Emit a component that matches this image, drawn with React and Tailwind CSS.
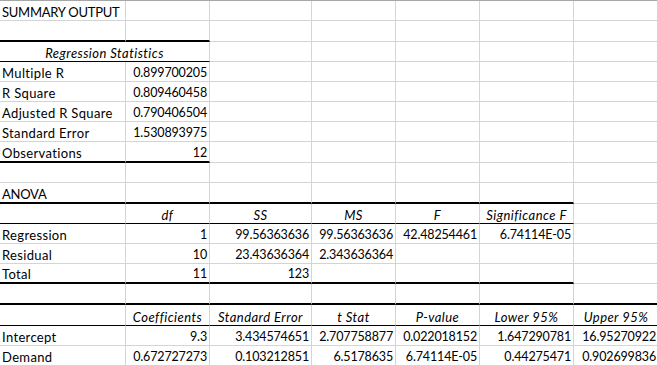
import React from 'react';

const COLS = [126, 84, 102, 84, 84, 94, 85];

// b: one char per column for the bottom edge — g gridline, k thin black, K thick black
// u: all-caps label
const rows = [
  { h: 20, c: [{ t: 'SUMMARY OUTPUT', u: true }] },
  { h: 21, c: [], b: 'KK' },
  { h: 20, c: [{ t: 'Regression Statistics', span: 2, a: 'c', i: true }], b: 'kk' },
  { h: 20, c: [{ t: 'Multiple R' }, { t: '0.899700205', a: 'r' }] },
  { h: 20, c: [{ t: 'R Square' }, { t: '0.809460458', a: 'r' }] },
  { h: 20, c: [{ t: 'Adjusted R Square' }, { t: '0.790406504', a: 'r' }] },
  { h: 20, c: [{ t: 'Standard Error' }, { t: '1.530893975', a: 'r' }] },
  { h: 21, c: [{ t: 'Observations' }, { t: '12', a: 'r' }], b: 'KK' },
  { h: 20, c: [] },
  { h: 21, c: [{ t: 'ANOVA', u: true }], b: 'KKKKKK' },
  {
    h: 20,
    c: [{}, { t: 'df', a: 'c', i: true }, { t: 'SS', a: 'c', i: true }, { t: 'MS', a: 'c', i: true }, { t: 'F', a: 'c', i: true }, { t: 'Significance F', a: 'c', i: true }],
    b: 'kkkkkk',
  },
  {
    h: 20,
    c: [{ t: 'Regression' }, { t: '1', a: 'r' }, { t: '99.56363636', a: 'r' }, { t: '99.56363636', a: 'r' }, { t: '42.48254461', a: 'r' }, { t: '6.74114E-05', a: 'r' }],
  },
  { h: 20, c: [{ t: 'Residual' }, { t: '10', a: 'r' }, { t: '23.43636364', a: 'r' }, { t: '2.343636364', a: 'r' }] },
  { h: 20, c: [{ t: 'Total' }, { t: '11', a: 'r' }, { t: '123', a: 'r' }], b: 'KKKKKK' },
  { h: 21, c: [], b: 'KKKKKKK' },
  {
    h: 21,
    c: [{}, { t: 'Coefficients', a: 'c', i: true }, { t: 'Standard Error', a: 'c', i: true }, { t: 't Stat', a: 'c', i: true }, { t: 'P-value', a: 'c', i: true }, { t: 'Lower 95%', a: 'c', i: true }, { t: 'Upper 95%', a: 'c', i: true }],
    b: 'kkkkkkk',
  },
  {
    h: 20,
    c: [{ t: 'Intercept' }, { t: '9.3', a: 'r' }, { t: '3.434574651', a: 'r' }, { t: '2.707758877', a: 'r' }, { t: '0.022018152', a: 'r' }, { t: '1.647290781', a: 'r' }, { t: '16.95270922', a: 'r' }],
  },
  {
    h: 20,
    c: [{ t: 'Demand' }, { t: '0.672727273', a: 'r' }, { t: '0.103212851', a: 'r' }, { t: '6.5178635', a: 'r' }, { t: '6.74114E-05', a: 'r' }, { t: '0.44275471', a: 'r' }, { t: '0.902699836', a: 'r' }],
  },
];

const bottomClass = {
  g: 'border-b border-[#d4d4d4]',
  k: 'border-b border-black',
  K: 'border-b-2 border-black',
};

const alignClass = {
  l: 'justify-start pl-[2px]',
  r: 'justify-end pr-[2px]',
  c: 'justify-center',
};

function textClass(cell) {
  if (cell.a === 'r') return 'text-[12.5px] tracking-[-0.15px]';
  if (cell.u) return 'text-[13px] tracking-[-0.25px]';
  if (cell.i) return 'text-[13px] tracking-[0.45px]';
  return 'text-[13px] tracking-[0.35px]';
}

function Row({ row }) {
  const cells = [];
  let col = 0;
  let idx = 0;
  while (col < COLS.length) {
    const cell = row.c[idx] || {};
    const span = cell.span || 1;
    const width = COLS.slice(col, col + span).reduce((s, w) => s + w, 0);
    const edge = (row.b && row.b[col]) || 'g';
    cells.push(
      <div
        key={col}
        style={{ width }}
        className={`flex shrink-0 items-end overflow-hidden whitespace-nowrap border-r border-r-[#d4d4d4] ${bottomClass[edge]} ${alignClass[cell.a || 'l']} ${cell.i ? 'italic' : ''}`}
      >
        {cell.t && <span className={`leading-[16px] ${textClass(cell)}`}>{cell.t}</span>}
      </div>
    );
    col += span;
    idx += 1;
  }
  return (
    <div className="flex" style={{ height: row.h }}>
      {cells}
    </div>
  );
}

export default function App() {
  return (
    <div className="h-[365px] w-[657px] overflow-hidden bg-white font-[Lato,sans-serif] text-black">
      <div className="h-px bg-[#a6a6a6]" />
      {rows.map((row, i) => (
        <Row key={i} row={row} />
      ))}
    </div>
  );
}
